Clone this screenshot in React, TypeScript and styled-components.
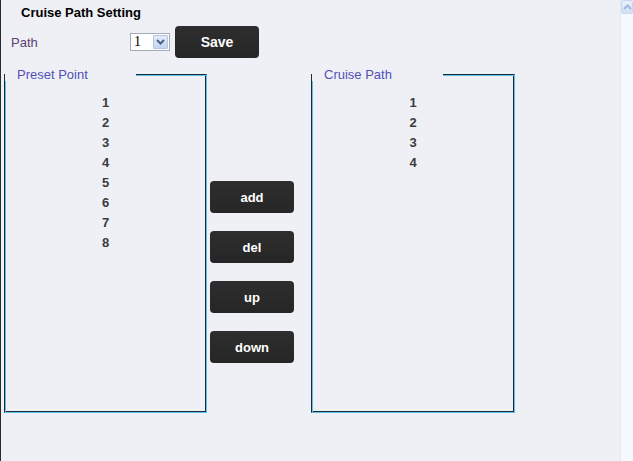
import React from 'react';
import styled, { createGlobalStyle } from 'styled-components';

const GlobalStyle = createGlobalStyle`
    html, body {
        margin: 0;
        padding: 0;
    }
    body {
        background: #eff0f5;
        font-family: "Liberation Sans", Arial, sans-serif;
    }
`;

const Frame = styled.div`
    display: flex;
    width: 633px;
    height: 461px;
    overflow: hidden;
`;

const Main = styled.div`
    flex: 1;
    border-left: 1px solid #2b2b2b;
    padding-left: 3px;
    background: #eff0f5;
`;

const Title = styled.div`
    height: 26px;
    line-height: 26px;
    padding-left: 17px;
    font-size: 13px;
    font-weight: bold;
    color: #000;
`;

const FormRow = styled.div`
    display: flex;
    align-items: center;
    height: 32px;
`;

const Label = styled.span`
    display: block;
    box-sizing: border-box;
    width: 126px;
    padding-left: 7px;
    font-size: 13px;
    color: #5a3f72;
`;

const SelectBox = styled.div`
    display: flex;
    align-items: center;
    box-sizing: border-box;
    width: 40px;
    height: 18px;
    border: 1px solid #a5acb5;
    background: #fff;
`;

const SelectValue = styled.span`
    flex: 1;
    padding-left: 3px;
    font-family: "Liberation Serif", "Times New Roman", serif;
    font-size: 14px;
    line-height: 16px;
    color: #000;
`;

const DropButton = styled.span`
    display: flex;
    align-items: center;
    justify-content: center;
    box-sizing: border-box;
    width: 15px;
    height: 14px;
    margin-right: 1px;
    border: 1px solid #b3c5e5;
    border-radius: 1px;
    background: linear-gradient(#e3ebf9, #c4d5f1);
`;

const Button = styled.button`
    width: 84px;
    height: 32px;
    padding: 0;
    border: none;
    border-radius: 4px;
    background: linear-gradient(#2e2e2e, #262626);
    color: #fff;
    font-family: "Liberation Sans", Arial, sans-serif;
    font-weight: bold;
    font-size: ${(p: { $big?: boolean }) => (p.$big ? '14px' : '13px')};
`;

const SaveButton = styled(Button)`
    margin-left: 5px;
`;

const Panels = styled.div`
    display: flex;
    align-items: flex-start;
    margin-top: 10px;
`;

const Panel = styled.fieldset<{ $width: number }>`
    box-sizing: border-box;
    width: ${(p) => p.$width}px;
    height: 345px;
    min-width: 0;
    margin: 0;
    padding: 12px 0 0;
    border: 1px solid;
    border-color: #1c2b38 #5cc0e4 #5cc0e4 #1c2b38;
    box-shadow: inset 1px 1px 0 #5cc0e4, inset -1px -1px 0 #1c2b38;
`;

const Legend = styled.legend`
    box-sizing: border-box;
    width: 131px;
    margin: 0;
    padding: 0 0 0 12px;
    font-size: 13px;
    line-height: 13px;
    color: #4f50b8;
    background: #eff0f5;
`;

const NumberList = styled.div`
    display: flex;
    flex-direction: column;
    align-items: center;
`;

const NumberItem = styled.div`
    line-height: 20px;
    font-size: 13px;
    font-weight: bold;
    color: #3b3b3b;
`;

const Actions = styled.div`
    display: flex;
    flex-direction: column;
    gap: 18px;
    box-sizing: border-box;
    width: 104px;
    padding: 113px 0 0 3px;
`;

const Scrollbar = styled.div`
    box-sizing: border-box;
    width: 13px;
    height: 461px;
    border-left: 1px solid #e2e9f6;
    background: #f5f8fd;
`;

const ScrollUp = styled.div`
    display: flex;
    align-items: center;
    justify-content: center;
    box-sizing: border-box;
    height: 14px;
    border: 1px solid #c9d7ef;
    border-radius: 2px;
    background: linear-gradient(#e8effb, #d3e0f5);
`;

const Chevron: React.FC<{ up?: boolean; color: string }> = ({ up, color }) => (
    <svg width="9" height="6" viewBox="0 0 9 6">
        <path
            d={up ? 'M1 5 L4.5 1.5 L8 5' : 'M1 1 L4.5 4.5 L8 1'}
            fill="none"
            stroke={color}
            strokeWidth="2"
        />
    </svg>
);

const presets = [1, 2, 3, 4, 5, 6, 7, 8];
const cruise = [1, 2, 3, 4];

const App: React.FC = () => (
    <Frame>
        <GlobalStyle />
        <Main>
            <Title>Cruise Path Setting</Title>
            <FormRow>
                <Label>Path</Label>
                <SelectBox>
                    <SelectValue>1</SelectValue>
                    <DropButton>
                        <Chevron color="#4a5f86" />
                    </DropButton>
                </SelectBox>
                <SaveButton $big>Save</SaveButton>
            </FormRow>
            <Panels>
                <Panel $width={203}>
                    <Legend>Preset Point</Legend>
                    <NumberList>
                        {presets.map((n) => (
                            <NumberItem key={n}>{n}</NumberItem>
                        ))}
                    </NumberList>
                </Panel>
                <Actions>
                    <Button>add</Button>
                    <Button>del</Button>
                    <Button>up</Button>
                    <Button>down</Button>
                </Actions>
                <Panel $width={204}>
                    <Legend>Cruise Path</Legend>
                    <NumberList>
                        {cruise.map((n) => (
                            <NumberItem key={n}>{n}</NumberItem>
                        ))}
                    </NumberList>
                </Panel>
            </Panels>
        </Main>
        <Scrollbar>
            <ScrollUp>
                <Chevron up color="#a3b7da" />
            </ScrollUp>
        </Scrollbar>
    </Frame>
);

export default App;
